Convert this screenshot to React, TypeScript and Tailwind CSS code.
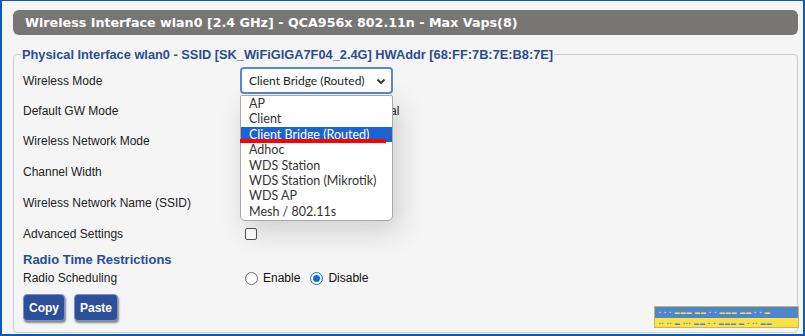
import React from "react";

const labelFont = { fontFamily: "'Liberation Sans', Arial, sans-serif" };
const listFont = { fontFamily: "Lato, 'Liberation Sans', sans-serif" };

function Row({ label, h, children }: { label: string; h: string; children?: React.ReactNode }) {
  return (
    <div className={`flex items-center ${h}`}>
      <div className="w-[217px] shrink-0 text-[12px] text-[#222]">{label}</div>
      <div className="flex items-center">{children}</div>
    </div>
  );
}

function Radio({ checked }: { checked?: boolean }) {
  return checked ? (
    <span className="inline-flex h-[13px] w-[13px] items-center justify-center rounded-full border-[1.5px] border-[#0f6ddb] bg-white">
      <span className="h-[7px] w-[7px] rounded-full bg-[#0f6ddb]" />
    </span>
  ) : (
    <span className="inline-block h-[13px] w-[13px] rounded-full border border-[#6b6b6b] bg-white" />
  );
}

export default function App() {
  const items = ["AP", "Client", "Client Bridge (Routed)", "Adhoc", "WDS Station", "WDS Station (Mikrotik)", "WDS AP", "Mesh / 802.11s"];
  return (
    <div
      className="relative h-[336px] w-[805px] overflow-hidden border-b-2 border-l-2 border-r-2 border-t border-[#0a5bb7] bg-[#f5f5f5] pl-[11px] pr-[5px] pt-[9px]"
      style={labelFont}
    >
      <div
        className="flex h-[25px] items-center rounded-[6px] bg-[#787674] pl-[12px] text-[12.7px] font-bold text-white"
        style={{ fontFamily: "'DejaVu Sans', Verdana, sans-serif" }}
      >
        Wireless Interface wlan0 [2.4 GHz] - QCA956x 802.11n - Max Vaps(8)
      </div>

      <fieldset className="mt-[10px] h-[288px] rounded-[4px] border border-[#cfcfcf] pl-[9px]">
        <legend className="ml-[-2px] px-[1px] text-[12.8px] font-bold text-[#2c4c92]">
          Physical Interface wlan0 - SSID [SK_WiFiGIGA7F04_2.4G] HWAddr [68:FF:7B:7E:B8:7E]
        </legend>

        <div className="mt-[1px] flex flex-col">
          <Row label="Wireless Mode" h="h-[31px]">
            <div
              className="flex h-[27px] w-[153px] items-center justify-between rounded-[4px] border-2 border-[#5b86d6] bg-white pl-[7px] pr-[4px] text-[12px] text-[#222]"
              style={listFont}
            >
              <span>Client Bridge (Routed)</span>
              <svg width="12" height="12" viewBox="0 0 12 12">
                <path d="M2.5 4.5 L6 8 L9.5 4.5" fill="none" stroke="#333" strokeWidth="1.8" />
              </svg>
            </div>
          </Row>
          <Row label="Default GW Mode" h="h-[30px]">
            <span className="ml-[120px] text-[12px] text-[#222]">Manual</span>
          </Row>
          <Row label="Wireless Network Mode" h="h-[30px]" />
          <Row label="Channel Width" h="h-[31px]" />
          <Row label="Wireless Network Name (SSID)" h="h-[31px]" />
          <Row label="Advanced Settings" h="h-[31px]">
            <span className="ml-[5px] inline-block h-[12px] w-[12px] rounded-[2px] border border-[#555] bg-white" />
          </Row>
          <div className="mt-[3px] h-[16px] text-[13px] font-bold leading-[16px] text-[#2c4c92]">Radio Time Restrictions</div>
          <Row label="Radio Scheduling" h="h-[20px]">
            <div className="ml-[5px] flex items-center text-[12px] text-[#111]">
              <Radio />
              <span className="ml-[5px]">Enable</span>
              <span className="ml-[10px]">
                <Radio checked />
              </span>
              <span className="ml-[5px]">Disable</span>
            </div>
          </Row>
          <div className="mt-[6px] flex gap-[9px]">
            <button className="h-[27px] w-[42px] rounded-[4px] border border-[#7d90c2] bg-[#2d4f99] text-[12px] font-bold text-white shadow-[1px_2px_2px_rgba(0,0,0,0.45)]">
              Copy
            </button>
            <button className="h-[27px] w-[44px] rounded-[4px] border border-[#7d90c2] bg-[#2d4f99] text-[12px] font-bold text-white shadow-[1px_2px_2px_rgba(0,0,0,0.45)]">
              Paste
            </button>
          </div>
        </div>
      </fieldset>

      {/* open dropdown list */}
      <div
        className="absolute left-[238px] top-[94px] w-[153px] rounded-b-[5px] rounded-t-[2px] border border-[#a8a8a8] bg-white text-[12.5px] leading-[15.4px] text-[#333] shadow-[6px_10px_28px_rgba(0,0,0,0.16)]"
        style={listFont}
      >
        {items.map((it) => (
          <div
            key={it}
            className={`h-[15.4px] pl-[8px] ${it === "Client Bridge (Routed)" ? "bg-[#1a64d1] text-white" : ""}`}
          >
            {it}
          </div>
        ))}
        <div className="h-[1px]" />
      </div>
      {/* red underline annotation */}
      <div className="absolute left-[238px] top-[138px] h-[4px] w-[146px] bg-[#ff0000]" />

      {/* watermark */}
      <div className="absolute left-[652px] top-[305px] flex h-[22px] w-[145px] flex-col overflow-hidden border border-[#c9b75a] text-[5px] leading-[11px]">
        <div className="h-[11px] bg-[#4d85cf] pl-[4px] tracking-[1px] text-[#f8e04a]">▪ ▪ ▪ ▬▬▬ ▬▬ ▪ ▪ ▬▬▬ ▬▬ ▪ ▪ ▬</div>
        <div className="h-[11px] bg-[#fbe046] pl-[4px] tracking-[1px] text-[#4d85cf]">▪▪ ▪▪ ▬ ▪▪▪ ▬▬ ▪ ▪ ▬▬▬ ▬ ▪ ▪▪ ▬▬</div>
      </div>
    </div>
  );
}
